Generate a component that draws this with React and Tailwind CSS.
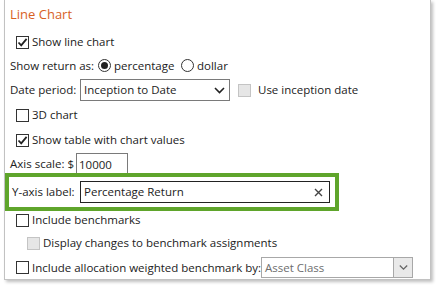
import React from 'react';

const Check = ({ checked, disabled }) => (
    <span
        className={
            "w-[13px] h-[13px] shrink-0 border flex items-center justify-center " +
            (disabled ? "bg-[#e6e6e6] border-[#c4c4c4]" : "bg-white border-[#333333]")
        }
    >
        {checked && (
            <svg width="11" height="11" viewBox="0 0 11 11">
                <path d="M1.5 5.5 L4.2 8.3 L9.6 1.8" fill="none" stroke="#222" strokeWidth="1.8" />
            </svg>
        )}
    </span>
);

const Radio = ({ checked }) => (
    <span className="w-[13px] h-[13px] shrink-0 rounded-full border border-[#333333] bg-white flex items-center justify-center">
        {checked && <span className="w-[7px] h-[7px] rounded-full bg-[#222]" />}
    </span>
);

const Chevron = ({ color = "#222", w = 11 }) => (
    <svg width={w} height="7" viewBox="0 0 11 7">
        <path d="M1 1 L5.5 5.5 L10 1" fill="none" stroke={color} strokeWidth="1.6" />
    </svg>
);

const App = () => {
    return (
        <div className="w-[440px] h-[291px] bg-white text-[#222] text-[11.5px] overflow-hidden" style={{ fontFamily: '"Open Sans", "Liberation Sans", sans-serif' }}>
            <div className="ml-[4px] w-[427px] h-[280px] border-l border-r border-b border-[#c2c2c2] shadow-[2px_2px_3px_rgba(0,0,0,0.25)] flex flex-col">
                <div className="h-[30px] pl-[5px] flex items-center text-[13px] text-[#d8611f]">Line Chart</div>

                <div className="h-[24px] pl-[11px] flex items-center gap-[3px]">
                    <Check checked />
                    <span>Show line chart</span>
                </div>

                <div className="h-[23px] pl-[5px] flex items-center">
                    <span className="w-[88px]">Show return as:</span>
                    <Radio checked />
                    <span className="ml-[3px] w-[67px]">percentage</span>
                    <Radio />
                    <span className="ml-[3px]">dollar</span>
                </div>

                <div className="h-[26px] pl-[5px] flex items-center">
                    <span className="w-[70px]">Date period:</span>
                    <div className="w-[150px] h-[22px] border border-[#7a7a7a] flex items-center justify-between pl-[3px] pr-[4px]">
                        <span>Inception to Date</span>
                        <Chevron />
                    </div>
                    <span className="ml-[8px] mr-[7px]"><Check disabled /></span>
                    <span>Use inception date</span>
                </div>

                <div className="h-[24px] pl-[11px] flex items-center gap-[3px]">
                    <Check />
                    <span>3D chart</span>
                </div>

                <div className="h-[26px] pl-[11px] flex items-center gap-[3px]">
                    <Check checked />
                    <span>Show table with chart values</span>
                </div>

                <div className="h-[20px] pl-[5px] flex items-start">
                    <span className="w-[66px] pt-[2px]">Axis scale: $</span>
                    <div className="w-[52px] h-[22px] border border-[#7a7a7a] pl-[2px] pt-[2px]">10000</div>
                </div>

                <div className="relative w-[334px] h-[38px] border-4 border-[#5fa52b] bg-white flex items-center pl-[3px]">
                    <span className="w-[68px]">Y-axis label:</span>
                    <div className="w-[250px] h-[22px] border border-[#222] flex items-center justify-between pl-[3px] pr-[6px]">
                        <span>Percentage Return</span>
                        <svg width="9" height="9" viewBox="0 0 9 9">
                            <path d="M1 1 L8 8 M8 1 L1 8" stroke="#444" strokeWidth="1.4" />
                        </svg>
                    </div>
                </div>

                <div className="h-[18px] pl-[11px] flex items-center gap-[3px]">
                    <Check />
                    <span>Include benchmarks</span>
                </div>

                <div className="h-[28px] pl-[22px] flex items-center gap-[3px]">
                    <Check disabled />
                    <span>Display changes to benchmark assignments</span>
                </div>

                <div className="h-[21px] pl-[11px] flex items-center">
                    <Check />
                    <span className="ml-[3px] w-[229px] whitespace-nowrap">Include allocation weighted benchmark by:</span>
                    <div className="w-[152px] h-[21px] border border-[#a8a8a8] flex items-center justify-between">
                        <span className="pl-[3px] text-[#6d6d6d]">Asset Class</span>
                        <div className="w-[19px] h-[19px] bg-[#e9e9e9] border-l border-[#a8a8a8] flex items-center justify-center">
                            <Chevron color="#666" w={9} />
                        </div>
                    </div>
                </div>
            </div>
        </div>
    );
};

export default App;
